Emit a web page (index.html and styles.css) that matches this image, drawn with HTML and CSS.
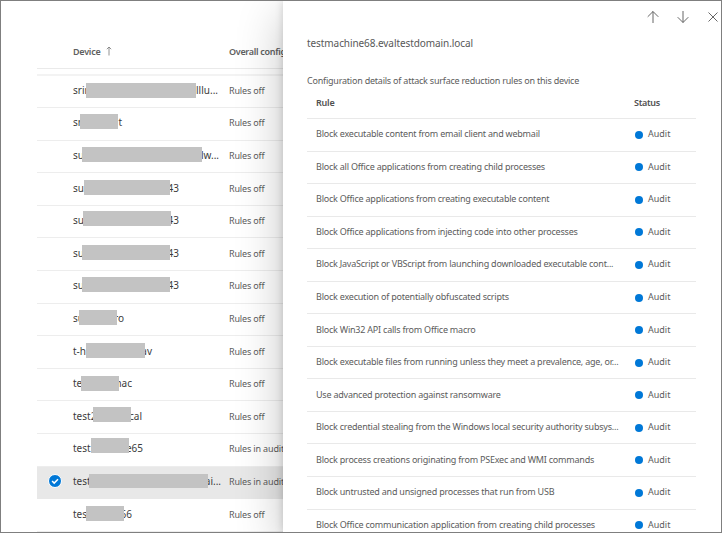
FILE: index.html
```html
<!DOCTYPE html>
<html lang="en">
<head>
<meta charset="utf-8">
<title>Attack surface reduction rules</title>
<link rel="stylesheet" href="styles.css">
</head>
<body>
<div class="app">
  <main class="devices">
    <div class="device-head"><span class="check"></span><span class="col-device">Device <svg class="sort" viewBox="0 0 6 10"><path d="M3 9.5V1M.8 3.2 3 1l2.200 2.200"/></svg></span><span class="col-config">Overall config</span></div>
    <div class="sticky-line"></div>
    <div class="row d1"><span class="check"></span><span class="col-device"><span class="name"><span>srin</span><i class="mask"></i><span>lllu...</span></span></span><span class="col-config">Rules off</span></div>
    <div class="row d2"><span class="check"></span><span class="col-device"><span class="name"><span>sn</span><i class="mask"></i><span>t</span></span></span><span class="col-config">Rules off</span></div>
    <div class="row d3"><span class="check"></span><span class="col-device"><span class="name"><span>su</span><i class="mask"></i><span>lw...</span></span></span><span class="col-config">Rules off</span></div>
    <div class="row d4"><span class="check"></span><span class="col-device"><span class="name"><span>su</span><i class="mask"></i><span>43</span></span></span><span class="col-config">Rules off</span></div>
    <div class="row d5"><span class="check"></span><span class="col-device"><span class="name"><span>su</span><i class="mask"></i><span>43</span></span></span><span class="col-config">Rules off</span></div>
    <div class="row d6"><span class="check"></span><span class="col-device"><span class="name"><span>su</span><i class="mask"></i><span>43</span></span></span><span class="col-config">Rules off</span></div>
    <div class="row d7"><span class="check"></span><span class="col-device"><span class="name"><span>su</span><i class="mask"></i><span>43</span></span></span><span class="col-config">Rules off</span></div>
    <div class="row d8"><span class="check"></span><span class="col-device"><span class="name"><span>su</span><i class="mask"></i><span>ro</span></span></span><span class="col-config">Rules off</span></div>
    <div class="row d9"><span class="check"></span><span class="col-device"><span class="name"><span>t-h</span><i class="mask"></i><span>av</span></span></span><span class="col-config">Rules off</span></div>
    <div class="row d10"><span class="check"></span><span class="col-device"><span class="name"><span>te</span><i class="mask"></i><span>mac</span></span></span><span class="col-config">Rules off</span></div>
    <div class="row d11"><span class="check"></span><span class="col-device"><span class="name"><span>test2</span><i class="mask"></i><span>cal</span></span></span><span class="col-config">Rules off</span></div>
    <div class="row d12"><span class="check"></span><span class="col-device"><span class="name"><span>test</span><i class="mask"></i><span>e65</span></span></span><span class="col-config">Rules in audit</span></div>
    <div class="row d13 selected"><span class="check"><svg viewBox="0 0 14 14"><circle cx="7" cy="7" r="6.500"/><path d="m4.100 7 2.100 2.100 3.800-3.900"/></svg></span><span class="col-device"><span class="name"><span>test</span><i class="mask"></i><span>ai...</span></span></span><span class="col-config">Rules in audit</span></div>
    <div class="row d14"><span class="check"></span><span class="col-device"><span class="name"><span>tes</span><i class="mask"></i><span>66</span></span></span><span class="col-config">Rules off</span></div>
  </main>
  <aside class="panel">
    <nav class="tools">
      <svg viewBox="0 0 12 14"><path d="M6 13V1.500M.7 6.800 6 1.500l5.300 5.300"/></svg>
      <svg viewBox="0 0 12 14"><path d="M6 1v11.500M.7 7.200 6 12.500l5.300-5.300"/></svg>
      <svg class="close" viewBox="0 0 12 14"><path d="m1.500 2.500 9 9m0-9-9 9"/></svg>
    </nav>
    <h1>testmachine68.evaltestdomain.local</h1>
    <p>Configuration details of attack surface reduction rules on this device</p>
    <div class="rules">
      <div class="rule head"><span>Rule</span><b>Status</b></div>
      <div class="rule"><span>Block executable content from email client and webmail</span><b>Audit</b></div>
      <div class="rule"><span>Block all Office applications from creating child processes</span><b>Audit</b></div>
      <div class="rule"><span>Block Office applications from creating executable content</span><b>Audit</b></div>
      <div class="rule"><span>Block Office applications from injecting code into other processes</span><b>Audit</b></div>
      <div class="rule"><span>Block JavaScript or VBScript from launching downloaded executable cont...</span><b>Audit</b></div>
      <div class="rule"><span>Block execution of potentially obfuscated scripts</span><b>Audit</b></div>
      <div class="rule"><span>Block Win32 API calls from Office macro</span><b>Audit</b></div>
      <div class="rule"><span>Block executable files from running unless they meet a prevalence, age, or...</span><b>Audit</b></div>
      <div class="rule"><span>Use advanced protection against ransomware</span><b>Audit</b></div>
      <div class="rule"><span>Block credential stealing from the Windows local security authority subsys...</span><b>Audit</b></div>
      <div class="rule"><span>Block process creations originating from PSExec and WMI commands</span><b>Audit</b></div>
      <div class="rule"><span>Block untrusted and unsigned processes that run from USB</span><b>Audit</b></div>
      <div class="rule"><span>Block Office communication application from creating child processes</span><b>Audit</b></div>
    </div>
  </aside>
</div>
</body>
</html>
```
FILE: styles.css
```css
* { box-sizing: border-box; }
body { margin: 0; background: #fff; }
.app {
  display: grid;
  grid-template-columns: 282px 438px;
  width: 722px;
  height: 533px;
  border: 1px solid #7f7f7f;
  overflow: hidden;
  font-family: "Noto Sans", "Open Sans", sans-serif;
  font-size: 9px;
  color: #5c5c5c;
  white-space: nowrap;
}
.devices { padding: 34px 0 0 36px; height: 531px; overflow: hidden; }
.device-head, .row { display: grid; grid-template-columns: 36px 156px 90px; align-items: center; }
.device-head { height: 34px; font-weight: 600; letter-spacing: -.25px; color: #606060; border-bottom: 1px solid #eaeaea; }
.col-config { letter-spacing: -.15px; }
.device-head .col-config { letter-spacing: -.3px; }
.sort { width: 6px; height: 10px; margin-left: 3px; vertical-align: -1px; fill: none; stroke: #777; stroke-width: .8; }
.sticky-line { height: 6.500px; border-bottom: 2px solid #f3f3f3; }
.row { height: 32.600px; border-bottom: 1px solid #ededed; padding-bottom: 2px; }
.selected { background: #e8e8e8; border-color: #e8e8e8; }
.check svg { display: block; width: 14px; height: 14px; margin-left: 11px; }
.check circle { fill: #0078d7; stroke: #fff; }
.check path { fill: none; stroke: #fff; stroke-width: 1.500; }
.name { position: relative; display: flex; justify-content: space-between; width: var(--w); font-size: 10px; line-height: 15px; letter-spacing: 0; color: #3c3c3c; }
.mask { position: absolute; left: var(--x); top: var(--y, 0); width: var(--m); height: 15px; background: #c3c3c3; }
.d1 { --w: 145px; --x: 13px; --m: 110px; }
.d2 { --w: 49px; --x: 7px; --m: 38px; --y: -1px; }
.d3 { --w: 146px; --x: 9px; --m: 120px; --y: -1px; }
.d4 { --w: 106px; --x: 11px; --m: 86px; --y: -1px; }
.d5 { --w: 106px; --x: 10px; --m: 88px; --y: -2px; }
.d6 { --w: 106px; --x: 9px; --m: 88px; --y: -1px; }
.d7 { --w: 106px; --x: 9px; --m: 88px; --y: -1px; }
.d8 { --w: 51px; --x: 6px; --m: 38px; --y: -1px; }
.d9 { --w: 79px; --x: 13px; --m: 59px; --y: -1px; }
.d10 { --w: 59px; --x: 8px; --m: 38px; }
.d11 { --w: 69px; --x: 20px; --m: 38px; --y: -2px; }
.d12 { --w: 70px; --x: 18px; --m: 38px; --y: -3px; }
.d13 { --w: 148px; --x: 16px; --m: 119px; }
.d13 .mask { height: 14px; }
.d14 { --w: 59px; --x: 13px; --m: 38px; --y: -1px; }
.panel { position: relative; padding: 9px 0 0 24px; background: #fff; box-shadow: 0 14px 44px rgba(0,0,0,.24), 0 0 8px rgba(0,0,0,.16); height: 531px; }
.tools { display: flex; justify-content: flex-end; gap: 18px; padding-right: 2px; height: 14px; }
.tools svg { width: 12px; height: 14px; fill: none; stroke: #555; stroke-width: .9; }
h1 { margin: 11px 0 0; font-size: 10px; line-height: 16px; font-weight: 400; letter-spacing: -.08px; color: #585858; }
p { margin: 22px 0 0; font-size: 9px; line-height: 16px; letter-spacing: -.22px; }
.rules { width: 389px; }
.rule { display: flex; align-items: center; height: 32.550px; padding: 0 0 2px 9px; border-bottom: 1px solid #e9e9e9; }
.rule span { width: 319px; letter-spacing: -.22px; }
.rule b { display: flex; align-items: center; font-weight: 400; }
.rule b::before { content: ""; width: 8px; height: 8px; margin: 2px 5px 0 0; border-radius: 50%; background: #0078d7; }
.head { height: 30px; color: #505050; padding-bottom: 3px; }
.head span, .head b { font-weight: 600; }
.head b { margin-left: -1px; letter-spacing: -.3px; }
.head b::before { display: none; }
```
